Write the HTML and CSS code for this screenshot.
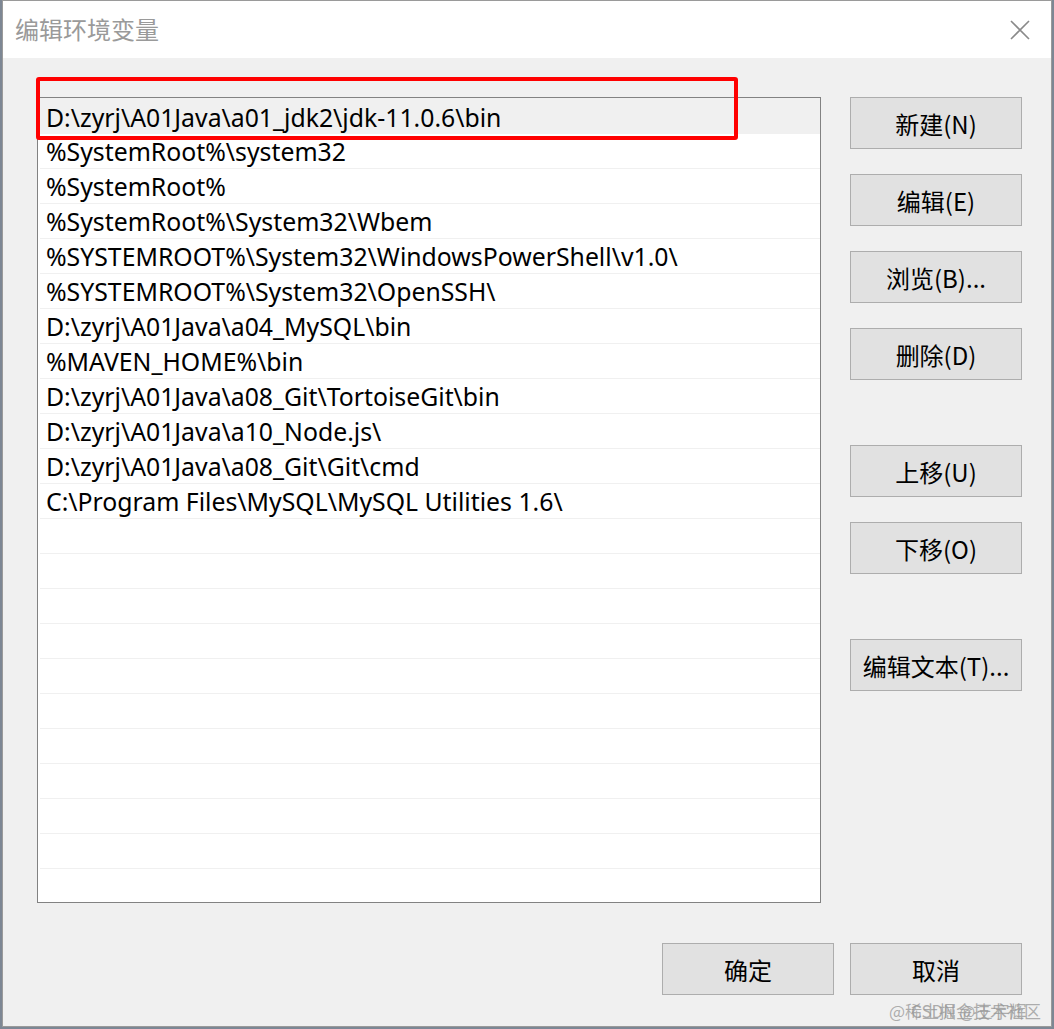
FILE: index.html
```html
<!DOCTYPE html>
<html lang="zh-CN">
<head>
<meta charset="UTF-8">
<title>编辑环境变量</title>
<link rel="stylesheet" href="styles.css">
</head>
<body>
<div class="window">
  <div class="titlebar">
    <span class="title">编辑环境变量</span>
    <svg class="close" width="20" height="20" viewBox="0 0 20 20">
      <path d="M1 1 L19 19 M19 1 L1 19" stroke="#8a8a8a" stroke-width="1.6" fill="none"/>
    </svg>
  </div>
  <div class="content">
    <div class="main">
      <div class="list">
        <div class="row selected">D:\zyrj\A01Java\a01_jdk2\jdk-11.0.6\bin</div>
        <div class="row">%SystemRoot%\system32</div>
        <div class="row">%SystemRoot%</div>
        <div class="row">%SystemRoot%\System32\Wbem</div>
        <div class="row">%SYSTEMROOT%\System32\WindowsPowerShell\v1.0\</div>
        <div class="row">%SYSTEMROOT%\System32\OpenSSH\</div>
        <div class="row">D:\zyrj\A01Java\a04_MySQL\bin</div>
        <div class="row">%MAVEN_HOME%\bin</div>
        <div class="row">D:\zyrj\A01Java\a08_Git\TortoiseGit\bin</div>
        <div class="row">D:\zyrj\A01Java\a10_Node.js\</div>
        <div class="row">D:\zyrj\A01Java\a08_Git\Git\cmd</div>
        <div class="row">C:\Program Files\MySQL\MySQL Utilities 1.6\</div>
        <div class="row"></div>
        <div class="row"></div>
        <div class="row"></div>
        <div class="row"></div>
        <div class="row"></div>
        <div class="row"></div>
        <div class="row"></div>
        <div class="row"></div>
        <div class="row"></div>
        <div class="row"></div>
        <div class="row"></div>
      </div>
      <div class="side">
        <button class="btn">新建(N)</button>
        <button class="btn">编辑(E)</button>
        <button class="btn">浏览(B)...</button>
        <button class="btn">删除(D)</button>
        <button class="btn group">上移(U)</button>
        <button class="btn">下移(O)</button>
        <button class="btn group">编辑文本(T)...</button>
      </div>
    </div>
    <div class="footer">
      <button class="btn">确定</button>
      <button class="btn">取消</button>
    </div>
  </div>
  <div class="highlight"></div>
  <div class="watermark"><span>@稀土掘金技术社区</span><span class="second">CSDN @王宇辉</span></div>
</div>
</body>
</html>
```

FILE: styles.css
```css
:root {
  --face: #f0f0f0;
  --btn: #e1e1e1;
  --btn-border: #adadad;
}
html, body {
  margin: 0; padding: 0;
}
body {
  background: #7d8794;
  font-family: "Noto Sans", "Noto Sans CJK SC", sans-serif;
  color: #000;
}
.window {
  position: relative;
  box-sizing: border-box;
  margin-left: 2px;
  width: 1050px; height: 1027px;
  border: 1px solid #9a9a9a;
  background: var(--face);
  display: flex; flex-direction: column;
}
.titlebar {
  height: 57px;
  background: #fff;
  display: flex; align-items: center; justify-content: space-between;
  padding: 0 21px 0 12px;
}
.title {
  font-size: 24px; color: #9a9a9a;
  font-family: "Noto Sans CJK SC", sans-serif;
  padding-bottom: 2px;
}
.close { display: block; }
.content {
  flex: 1;
  display: flex; flex-direction: column;
  padding: 39px 29px 0 34px;
}
.main {
  display: flex; gap: 29px;
}
.list {
  box-sizing: border-box;
  width: 784px; height: 806px;
  border: 1px solid #828282;
  background: #fff;
  overflow: hidden;
}
.row {
  height: 35px; line-height: 35px;
  margin-left: 2px;
  padding-left: 6px;
  font-size: 24.8px;
  white-space: nowrap;
  border-bottom: 1px solid #f0f0f0;
  box-sizing: border-box;
}
.row.selected {
  background: var(--face);
  margin-left: 0;
  padding-left: 8px;
  height: 36px;
  line-height: 38px;
}
.side {
  display: flex; flex-direction: column; gap: 25px;
  width: 172px;
}
.side .group { margin-top: 40px; }
.btn {
  box-sizing: border-box;
  width: 172px; height: 52px;
  background: var(--btn);
  border: 1px solid var(--btn-border);
  border-radius: 0;
  padding: 0;
  font-family: "Noto Sans CJK SC", "Noto Sans", sans-serif;
  font-size: 24px;
  color: #000;
}
.footer {
  display: flex; justify-content: flex-end; gap: 16px;
  margin-top: 40px;
}
.highlight {
  position: absolute;
  left: 33px; top: 76px;
  width: 702px; height: 63px;
  box-sizing: border-box;
  border: 4px solid #ff0000;
  border-radius: 3px;
}
.watermark {
  position: absolute;
  right: 0; bottom: 4px;
  width: 162px; height: 24px;
  font-family: "Noto Sans CJK SC", sans-serif;
  font-size: 17px;
  color: rgba(150, 150, 150, 0.75);
  white-space: nowrap;
}
.watermark span { position: absolute; left: 0; top: 0; }
.watermark .second { left: 22px; }
```
